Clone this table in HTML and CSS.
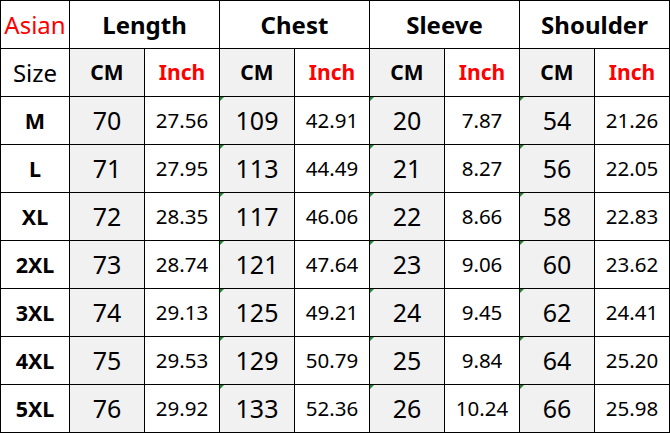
FILE: index.html
```html
<!DOCTYPE html>
<html>
<head>
<meta charset="utf-8">
<link rel="stylesheet" href="styles.css">
</head>
<body>
<div class="sheet">
  <div class="c red hd-l">Asian</div>
  <div class="c hd span2">Length</div>
  <div class="c hd span2">Chest</div>
  <div class="c hd span2">Sleeve</div>
  <div class="c hd span2">Shoulder</div>

  <div class="c hd-l">Size</div>
  <div class="c sub g">CM</div><div class="c sub red">Inch</div>
  <div class="c sub g">CM</div><div class="c sub red">Inch</div>
  <div class="c sub g">CM</div><div class="c sub red">Inch</div>
  <div class="c sub g">CM</div><div class="c sub red">Inch</div>

  <div class="c sz">M</div>
  <div class="c cm g">70</div><div class="c in">27.56</div>
  <div class="c cm g mk">109</div><div class="c in">42.91</div>
  <div class="c cm g mk">20</div><div class="c in">7.87</div>
  <div class="c cm g mk">54</div><div class="c in">21.26</div>

  <div class="c sz">L</div>
  <div class="c cm g">71</div><div class="c in">27.95</div>
  <div class="c cm g mk">113</div><div class="c in">44.49</div>
  <div class="c cm g mk">21</div><div class="c in">8.27</div>
  <div class="c cm g mk">56</div><div class="c in">22.05</div>

  <div class="c sz">XL</div>
  <div class="c cm g">72</div><div class="c in">28.35</div>
  <div class="c cm g mk">117</div><div class="c in">46.06</div>
  <div class="c cm g mk">22</div><div class="c in">8.66</div>
  <div class="c cm g mk">58</div><div class="c in">22.83</div>

  <div class="c sz">2XL</div>
  <div class="c cm g">73</div><div class="c in">28.74</div>
  <div class="c cm g mk">121</div><div class="c in">47.64</div>
  <div class="c cm g mk">23</div><div class="c in">9.06</div>
  <div class="c cm g mk">60</div><div class="c in">23.62</div>

  <div class="c sz">3XL</div>
  <div class="c cm g">74</div><div class="c in">29.13</div>
  <div class="c cm g mk">125</div><div class="c in">49.21</div>
  <div class="c cm g mk">24</div><div class="c in">9.45</div>
  <div class="c cm g mk">62</div><div class="c in">24.41</div>

  <div class="c sz">4XL</div>
  <div class="c cm g">75</div><div class="c in">29.53</div>
  <div class="c cm g mk">129</div><div class="c in">50.79</div>
  <div class="c cm g mk">25</div><div class="c in">9.84</div>
  <div class="c cm g mk">64</div><div class="c in">25.20</div>

  <div class="c sz">5XL</div>
  <div class="c cm g">76</div><div class="c in">29.92</div>
  <div class="c cm g mk">133</div><div class="c in">52.36</div>
  <div class="c cm g mk">26</div><div class="c in">10.24</div>
  <div class="c cm g mk">66</div><div class="c in">25.98</div>
</div>
</body>
</html>
```

FILE: styles.css
```css
html, body {
  margin: 0;
  padding: 0;
  background: #ffffff;
}
.sheet {
  width: 670px;
  height: 433px;
  box-sizing: border-box;
  padding: 1px;
  background: #000000;
  display: grid;
  grid-template-columns: 68px repeat(8, 74px);
  grid-template-rows: repeat(9, 47px);
  gap: 1px;
  font-family: "Noto Sans", "Open Sans", sans-serif;
  color: #000000;
}
.c {
  background: #ffffff;
  display: flex;
  align-items: center;
  justify-content: center;
  position: relative;
  line-height: 1;
  white-space: nowrap;
}
.g {
  background: #f1f1f1;
}
.span2 {
  grid-column: span 2;
}
.red {
  color: #ff0000;
}
.hd-l {
  font-size: 24px;
}
.hd {
  font-size: 24px;
  font-weight: 700;
}
.sub {
  font-size: 21px;
  font-weight: 700;
}
.sz {
  font-size: 21.5px;
  font-weight: 700;
}
.cm {
  font-size: 25px;
}
.in {
  font-size: 20.5px;
}
.mk::before {
  content: "";
  position: absolute;
  left: 0;
  top: 0;
  width: 0;
  height: 0;
  border-top: 4px solid #1a8a2a;
  border-right: 4px solid transparent;
}
```
